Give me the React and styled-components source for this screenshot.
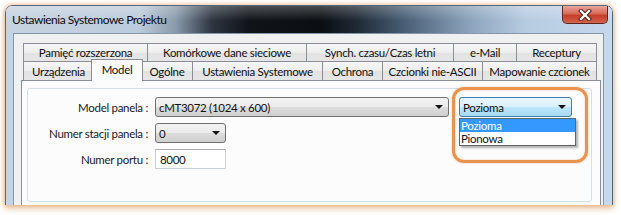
import React from "react";
import styled, { createGlobalStyle } from "styled-components";

const GlobalStyle = createGlobalStyle`
  html, body {
    margin: 0;
    padding: 0;
    background: #ffffff;
  }
  body {
    font-family: Lato, "Noto Sans", sans-serif;
    font-size: 11.5px;
    letter-spacing: -0.3px;
    color: #111;
  }
`;

const Shot = styled.div`
  width: 621px;
  height: 215px;
  padding: 5px 8px 0 5px;
  box-sizing: border-box;
  background: #fff;
`;

const Crop = styled.div`
  height: 200px;
  overflow: hidden;
  border-radius: 7px 7px 0 0;
  box-shadow: 0 0 4px 1px rgba(226, 150, 80, 0.55), 0 4px 6px rgba(214, 150, 90, 0.45);
`;

const Window = styled.div`
  height: 260px;
  border: 1px solid #55677a;
  border-radius: 7px 7px 0 0;
  background: linear-gradient(90deg, #c3d4e6 0%, #c6d8ec 100%);
  display: flex;
  flex-direction: column;
  box-sizing: border-box;
`;

const TitleBar = styled.div`
  height: 27px;
  flex: none;
  display: flex;
  align-items: flex-start;
  padding-left: 6px;
  border-radius: 6px 6px 0 0;
  background:
    linear-gradient(180deg, rgba(255, 255, 255, 0.25) 0%, rgba(255, 255, 255, 0) 55%),
    linear-gradient(90deg, #c6d3e1 0%, #bccbdb 22%, #8a9aab 28%, #2c3540 34%, #101419 40%, #0b0e12 52%, #1f2a36 58%, #4a6077 66%, #8ea6bf 77%, #b8cce1 86%, #c4d7eb 100%);
`;

const Title = styled.span`
  margin-top: 6px;
  font-size: 12px;
  letter-spacing: -0.5px;
  color: #0c0c0c;
`;

const CloseButton = styled.div`
  margin-left: auto;
  margin-right: 4px;
  width: 46px;
  height: 18px;
  box-sizing: border-box;
  border: 1px solid #5a231b;
  border-top: none;
  border-radius: 0 0 5px 5px;
  background: linear-gradient(180deg, #e9a397 0%, #d86a58 45%, #c53e2c 55%, #d0604a 100%);
  display: flex;
  align-items: center;
  justify-content: center;
  box-shadow: inset 0 0 1px rgba(255, 255, 255, 0.6);
`;

const Frame = styled.div`
  flex: 1;
  padding: 0 8px 0 7px;
  display: flex;
`;

const Client = styled.div`
  flex: 1;
  border: 1px solid #8597ab;
  background: #f0f0f0;
  padding: 9px 2px 0 7px;
  display: flex;
  flex-direction: column;
`;

const TabRow = styled.div`
  display: flex;
  align-items: flex-end;
  padding-left: 2px;
  height: ${(p) => p.$h}px;
`;

const Tab = styled.div`
  flex: none;
  width: ${(p) => p.$w}px;
  height: ${(p) => p.$h}px;
  box-sizing: border-box;
  border: 1px solid #8b8e96;
  border-bottom: none;
  border-right: none;
  background: linear-gradient(180deg, #f6f6f6 0%, #eeeeee 50%, #e2e2e2 51%, #e6e6e6 100%);
  display: flex;
  align-items: center;
  justify-content: center;
  white-space: nowrap;
  overflow: hidden;
  color: #111;
  &:last-child {
    border-right: 1px solid #8b8e96;
  }
`;

const ActiveTab = styled(Tab)`
  width: ${(p) => p.$w + 4}px;
  height: ${(p) => p.$h + 3}px;
  margin: 0 -2px -1px;
  position: relative;
  z-index: 1;
  background: #fcfcfd;
  border-right: 1px solid #8b8e96;
  padding-bottom: 3px;
`;

const Panel = styled.div`
  flex: 1;
  border: 1px solid #8b8e96;
  background: #fcfcfd;
  padding: 7px 8px 0 5px;
`;

const GroupBox = styled.div`
  height: 114px;
  box-sizing: border-box;
  border: 1px solid #d5dfe5;
  border-radius: 3px;
  padding-top: 8px;
  display: grid;
  grid-template-columns: 120px 294px 116px;
  grid-auto-rows: 20px;
  column-gap: 7px;
  row-gap: 6px;
  align-items: center;
`;

const Label = styled.div`
  text-align: right;
  white-space: nowrap;
  color: #1a1a1a;
`;

const Combo = styled.div`
  width: ${(p) => (p.$w ? `${p.$w}px` : "auto")};
  height: 20px;
  box-sizing: border-box;
  border: 1px solid #707070;
  border-radius: 3px;
  background: linear-gradient(180deg, #f2f2f2 0%, #ebebeb 50%, #dddddd 51%, #cfcfcf 100%);
  display: flex;
  align-items: center;
  padding: 0 5px 0 3px;
  color: #111;
`;

const HotCombo = styled(Combo)`
  border-color: #3c7fb1;
  background: linear-gradient(180deg, #eaf6fd 0%, #d9f0fc 50%, #bee6fd 51%, #a7d9f5 100%);
  margin-left: 3px;
`;

const ComboText = styled.span`
  flex: 1;
`;

const Arrow = styled.span`
  width: 0;
  height: 0;
  border-left: 4px solid transparent;
  border-right: 4px solid transparent;
  border-top: 4px solid #111;
`;

const TextField = styled.div`
  width: 71px;
  height: 20px;
  box-sizing: border-box;
  border: 1px solid #c9d0d8;
  border-top-color: #abadb3;
  background: #fff;
  display: flex;
  align-items: center;
  padding-left: 4px;
`;

const OrientCell = styled.div`
  position: relative;
  height: 20px;
`;

const Highlight = styled.div`
  position: absolute;
  left: -4px;
  top: -10px;
  width: 136px;
  height: 76px;
  box-sizing: border-box;
  border: 3px solid #e8944e;
  border-radius: 12px;
  box-shadow: 0 0 2px rgba(232, 148, 78, 0.6), inset 0 0 2px rgba(232, 148, 78, 0.5);
  pointer-events: none;
`;

const DropList = styled.div`
  position: absolute;
  left: 3px;
  top: 21px;
  width: 117px;
  box-sizing: border-box;
  border: 1px solid #646464;
  background: #fff;
  box-shadow: 2px 2px 2px rgba(0, 0, 0, 0.3);
  z-index: 2;
`;

const Option = styled.div`
  height: 13px;
  line-height: 13px;
  padding-left: 1px;
  background: ${(p) => (p.$selected ? "#3399ff" : "#fff")};
  color: ${(p) => (p.$selected ? "#fff" : "#111")};
`;

const topTabs = [
  ["Pamięć rozszerzona", 124],
  ["Komórkowe dane sieciowe", 159],
  ["Synch. czasu/Czas letni", 147],
  ["e-Mail", 63],
  ["Receptury", 81],
];

const bottomTabs = [
  ["Urządzenia", 70],
  ["Model", 48, true],
  ["Ogólne", 51],
  ["Ustawienia Systemowe", 130],
  ["Ochrona", 60],
  ["Czcionki nie-ASCII", 100],
  ["Mapowanie czcionek", 115],
];

const CloseIcon = () => (
  <svg width="14" height="12" viewBox="0 0 14 12">
    <path d="M3 2 L11 10 M11 2 L3 10" stroke="#4a160f" strokeWidth="4.2" strokeLinecap="square" />
    <path d="M3 2 L11 10 M11 2 L3 10" stroke="#ffffff" strokeWidth="2.4" strokeLinecap="square" />
  </svg>
);

export default function App() {
  return (
    <>
      <GlobalStyle />
      <Shot>
        <Crop>
          <Window>
            <TitleBar>
              <Title>Ustawienia Systemowe Projektu</Title>
              <CloseButton>
                <CloseIcon />
              </CloseButton>
            </TitleBar>
            <Frame>
              <Client>
                <TabRow $h={18}>
                  {topTabs.map(([t, w]) => (
                    <Tab key={t} $w={w} $h={18}>
                      {t}
                    </Tab>
                  ))}
                </TabRow>
                <TabRow $h={19}>
                  {bottomTabs.map(([t, w, sel]) =>
                    sel ? (
                      <ActiveTab key={t} $w={w} $h={19}>
                        {t}
                      </ActiveTab>
                    ) : (
                      <Tab key={t} $w={w} $h={19}>
                        {t}
                      </Tab>
                    )
                  )}
                </TabRow>
                <Panel>
                  <GroupBox>
                    <Label>Model panela :</Label>
                    <Combo>
                      <ComboText>cMT3072 (1024 x 600)</ComboText>
                      <Arrow />
                    </Combo>
                    <OrientCell>
                      <HotCombo>
                        <ComboText>Pozioma</ComboText>
                        <Arrow />
                      </HotCombo>
                      <DropList>
                        <Option $selected>Pozioma</Option>
                        <Option>Pionowa</Option>
                      </DropList>
                      <Highlight />
                    </OrientCell>

                    <Label>Numer stacji panela :</Label>
                    <Combo $w={71}>
                      <ComboText>0</ComboText>
                      <Arrow />
                    </Combo>
                    <div />

                    <Label>Numer portu :</Label>
                    <TextField>8000</TextField>
                    <div />
                  </GroupBox>
                </Panel>
              </Client>
            </Frame>
          </Window>
        </Crop>
      </Shot>
    </>
  );
}
